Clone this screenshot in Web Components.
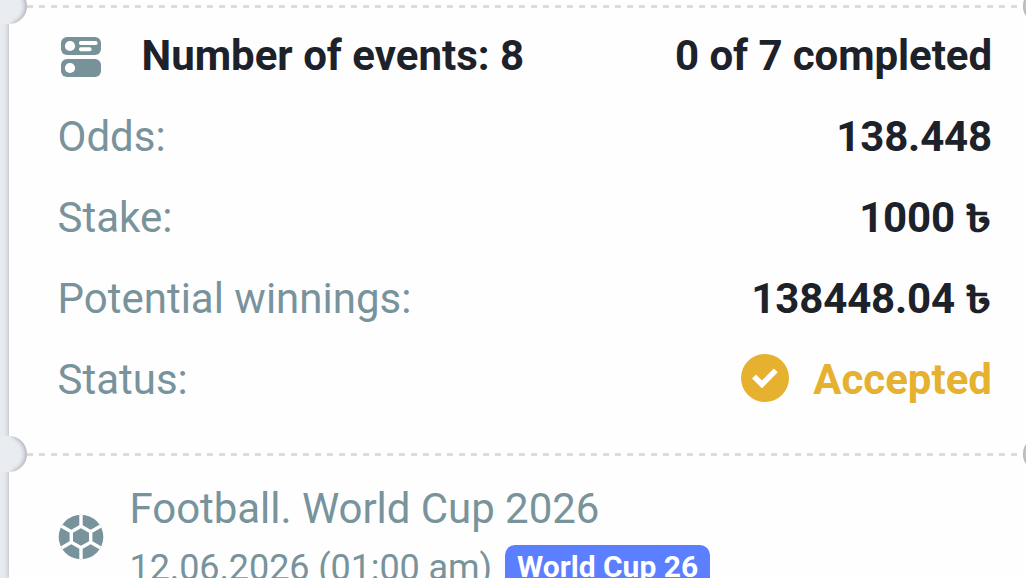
<!DOCTYPE html>
<html lang="en">
<head>
<meta charset="utf-8">
<title>Bet slip</title>
<style>
html, body { margin: 0; height: 100%; overflow: hidden; background: #e7eaef; font-family: Roboto, "Noto Sans", sans-serif; }
</style>
</head>
<body>
<bet-ticket>
  <ticket-tear></ticket-tear>
  <ticket-summary>
    <ticket-row class="head"><events-icon slot="icon"></events-icon><span slot="label">Number of events: 8</span><span>0 of 7 completed</span></ticket-row>
    <ticket-row><span slot="label">Odds:</span><span>138.448</span></ticket-row>
    <ticket-row><span slot="label">Stake:</span><span>1000</span><taka-sign>৳</taka-sign></ticket-row>
    <ticket-row><span slot="label">Potential winnings:</span><span>138448.04</span><taka-sign>৳</taka-sign></ticket-row>
    <ticket-row><span slot="label">Status:</span><ticket-status>Accepted</ticket-status></ticket-row>
  </ticket-summary>
  <ticket-tear></ticket-tear>
  <event-card><span slot="title">Football. World Cup 2026</span><span slot="date">12.06.2026 (01:00 am)</span><event-tag slot="tag">World Cup 26</event-tag></event-card>
</bet-ticket>
<script>
const define = (name, html) => customElements.define(name, class extends HTMLElement {
  constructor() {
    super();
    this.attachShadow({ mode: 'open' }).innerHTML = html;
  }
});

define('bet-ticket', `
<style>
:host { display: flex; flex-direction: column; box-sizing: border-box; height: 578px; margin-left: 9px; background: #fefefe; box-shadow: -1px 0 4px rgba(90,98,110,.3); }
</style><slot></slot>`);

define('ticket-tear', `
<style>
:host { display: block; position: relative; flex: none; height: 13px; }
.line { height: 3px; margin: 0 5px 0 18px; position: relative; top: 5px;
  background: repeating-linear-gradient(90deg, #dcdcdf 0 6px, transparent 6px 12px); }
.notch { position: absolute; top: -12px; width: 36px; height: 36px; border-radius: 50%; box-sizing: border-box; background: #e9ecf1; box-shadow: inset -2px 0 4px rgba(90,96,108,.42); }
.left { left: -18px; }
.left::before { content: ""; position: absolute; left: 6px; top: 0; width: 18px; height: 36px; background: linear-gradient(90deg, #e9ecf1 65%, #e9ecf100); }
.right { right: -33px; background: #cfd0d6; box-shadow: inset 2px 0 3px rgba(90,96,108,.25); }
</style>
<div class="line"></div><div class="notch left"></div><div class="notch right"></div>`);

define('ticket-summary', `
<style>
:host { display: flex; flex-direction: column; flex: none; height: 434.5px; box-sizing: border-box; padding: 2px 34px 0 48.5px; }
</style><slot></slot>`);

define('ticket-row', `
<style>
:host { display: flex; align-items: center; height: 81px; flex: none; font-size: 42px; line-height: 50px; color: #1d2129; font-weight: 700; white-space: nowrap; }
.label { color: #78939b; font-weight: 400; flex: 1; }
:host(.head) .label { color: inherit; font-weight: 700; }
.value { display: flex; align-items: center; letter-spacing: -.15px; }
:host(.head) .value { letter-spacing: -.08px; }
</style>
<slot name="icon"></slot><div class="label"><slot name="label"></slot></div><div class="value"><slot></slot></div>`);

define('taka-sign', `
<style>
:host { display: block; height: 50px; margin-left: 15.5px; font-size: 36px; line-height: 50px; font-weight: 600; transform: translate(.5px, 2px) scaleX(1.3); transform-origin: 100% 50%; font-family: Roboto, "Noto Sans Bengali", "Noto Sans", sans-serif; }
</style><slot></slot>`);

define('ticket-status', `
<style>
:host { display: flex; align-items: center; gap: 24px; color: #e5b12e; letter-spacing: 0; }
svg { display: block; width: 48px; height: 48px; margin-top: -4px; }
</style>
<svg viewBox="0 0 48 48"><circle cx="24" cy="24" r="24" fill="#e5b12e"/><path d="M13 22.5 20.9 30.5 34.8 16.3" fill="none" stroke="#fff" stroke-width="5.4"/></svg><slot></slot>`);

define('events-icon', `
<style>
:host { display: block; width: 40px; height: 40px; margin: 2px 40.5px 0 3.5px; }
svg { display: block; }
</style>
<svg width="40" height="40" viewBox="0 0 40 40"><rect width="40" height="18" rx="6" fill="#78929a"/><rect y="22" width="40" height="18" rx="6" fill="#78929a"/><g fill="#fff"><circle cx="9" cy="9" r="5.1"/><circle cx="9" cy="31" r="5.1"/><rect x="18" y="4" width="18.5" height="4" rx="1.7"/><rect x="18" y="10.3" width="12.5" height="4" rx="1.7"/></g></svg>`);

define('event-card', `
<style>
:host { display: flex; flex: none; padding: 19.5px 0 0 49px; color: #78939b; white-space: nowrap; }
svg { flex: none; display: block; width: 46px; height: 46px; margin: 34px 25.5px 0 0; }
.title { font-size: 42px; line-height: 58px; letter-spacing: -.04px; }
.meta { display: flex; align-items: center; gap: 13px; font-size: 36px; line-height: 60px; height: 60px; letter-spacing: -.09px; }
</style>
<svg viewBox="0 0 46 46"><defs><clipPath id="ball"><circle cx="23" cy="23" r="22.3"/></clipPath></defs><g clip-path="url(#ball)"><rect width="46" height="46" fill="#78939b"/><path d="M23 12.3 32.7 17.7v10.6L23 33.7 13.3 28.3V17.7Z M23 12.3V0M32.7 17.7 44 11.2M32.7 28.3 44 34.8M23 33.7V46M13.3 28.3 2 34.8M13.3 17.7 2 11.2" fill="none" stroke="#fff" stroke-width="3.4"/></g></svg>
<div><div class="title"><slot name="title"></slot></div><div class="meta"><slot name="date"></slot><slot name="tag"></slot></div></div>`);

define('event-tag', `
<style>
:host { display: block; height: 44px; line-height: 44px; padding: 0 12px; margin-top: -2px; border-radius: 10px; background: #5c7fff; color: #fff; font-size: 30px; font-weight: 700; letter-spacing: 0; }
</style><slot></slot>`);
</script>
</body>
</html>
